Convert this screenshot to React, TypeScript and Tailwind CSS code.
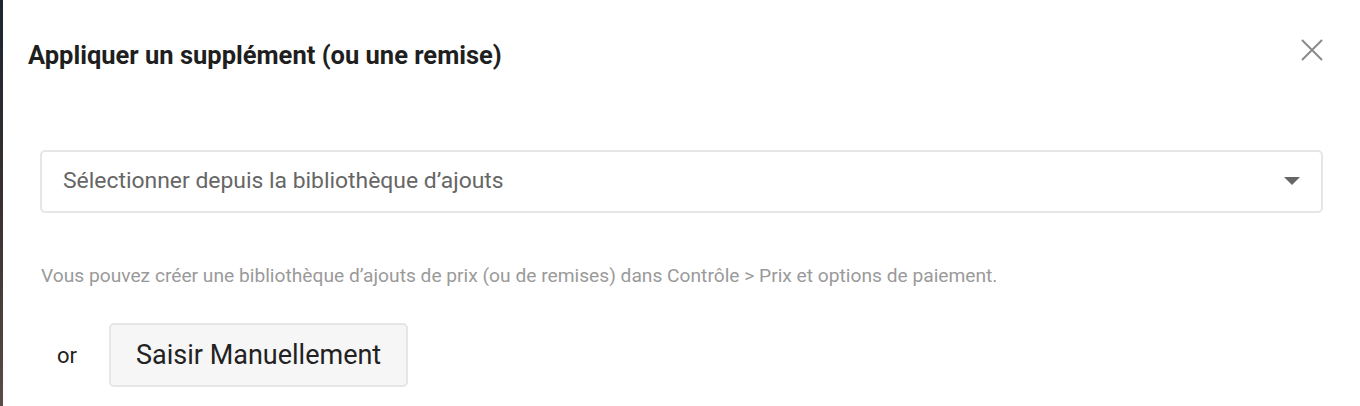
const App = () => {
  return (
    <div
      className="flex h-[406px] w-[1360px] overflow-hidden bg-white"
      style={{ fontFamily: 'Roboto, "Liberation Sans", sans-serif' }}
    >
      <div className="w-[3px] shrink-0 bg-gradient-to-b from-[#1c2433] via-[#3a3030] to-[#5a4c46]" />
      <div className="flex-1 pr-[37px]">
        <div className="flex items-start justify-between pl-[25px] pt-[39px]">
          <h2 className="text-[25.5px] font-bold leading-[32px] text-[#1f1f1f]">
            Appliquer un supplément (ou une remise)
          </h2>
          <button className="mr-[-2px] mt-[-2px] text-[#8a8a8a]">
            <svg width="26" height="26" viewBox="0 0 26 26" fill="none" stroke="currentColor" strokeWidth="2">
              <path d="M3 3L23 23M23 3L3 23" />
            </svg>
          </button>
        </div>

        <div className="pl-[37px]">
          <div className="mt-[79px] flex h-[63px] items-center justify-between rounded-[5px] border-2 border-[#e6e6e6] pl-[21px] pr-[21px]">
            <span className="text-[22.9px] text-[#666666]">Sélectionner depuis la bibliothèque d’ajouts</span>
            <svg width="16" height="9" viewBox="0 0 16 9" className="text-[#666666]">
              <path d="M0 0H16L8 8Z" fill="currentColor" />
            </svg>
          </div>

          <p className="mt-[51px] pl-[1px] text-[19.2px] leading-[24px] text-[#9a9a9a]">
            Vous pouvez créer une bibliothèque d’ajouts de prix (ou de remises) dans Contrôle &gt; Prix et options de paiement.
          </p>

          <div className="mt-[35px] flex items-center">
            <span className="ml-[17px] text-[22px] text-[#222222]">or</span>
            <button className="ml-[32px] h-[64px] rounded-[5px] border-2 border-[#e6e6e6] bg-[#f6f6f6] px-[25px] text-[27px] text-[#222222]">
              Saisir Manuellement
            </button>
          </div>
        </div>
      </div>
    </div>
  );
};

export default App;
